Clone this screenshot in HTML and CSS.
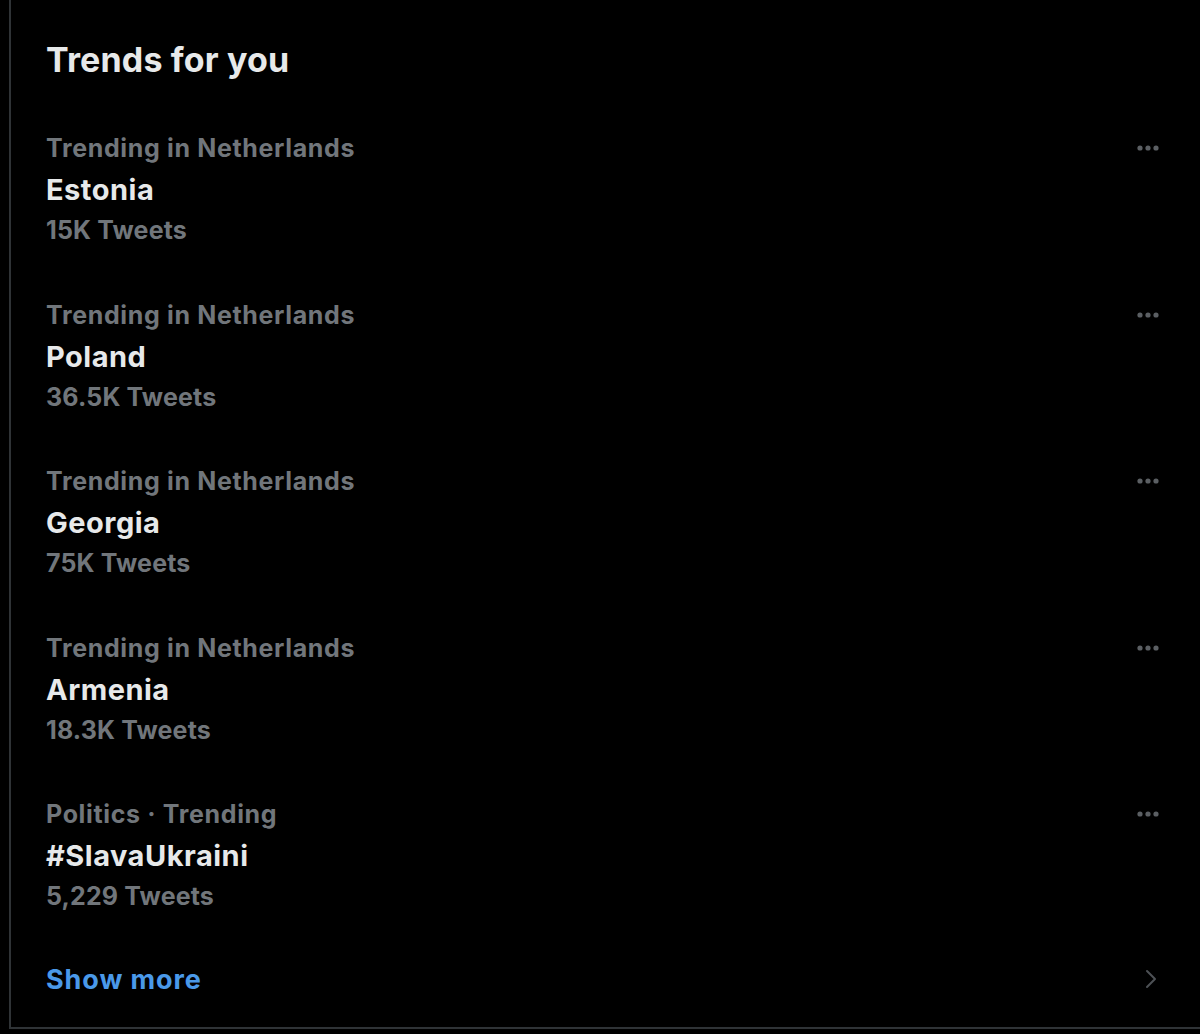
FILE: index.html
```html
<!DOCTYPE html>
<html lang="en">
<head>
  <meta charset="UTF-8"/>
  <title>Trends for you</title>
  <meta name="viewport" content="width=device-width,initial-scale=1"/>
  <link rel="stylesheet" href="styles.css">
</head>
<body>

  <section class="trends">
    <h2 class="trends-title">Trends for you</h2>

    <div class="trend">
      <div class="trend-text">
        <div class="trend-meta">Trending in Netherlands</div>
        <div class="trend-name">Estonia</div>
        <div class="trend-count">15K Tweets</div>
      </div>
      <svg class="more" width="24" height="8" viewBox="0 0 24 8"><circle cx="4" cy="4" r="2.6"/><circle cx="12" cy="4" r="2.6"/><circle cx="20" cy="4" r="2.6"/></svg>
    </div>

    <div class="trend">
      <div class="trend-text">
        <div class="trend-meta">Trending in Netherlands</div>
        <div class="trend-name">Poland</div>
        <div class="trend-count">36.5K Tweets</div>
      </div>
      <svg class="more" width="24" height="8" viewBox="0 0 24 8"><circle cx="4" cy="4" r="2.6"/><circle cx="12" cy="4" r="2.6"/><circle cx="20" cy="4" r="2.6"/></svg>
    </div>

    <div class="trend">
      <div class="trend-text">
        <div class="trend-meta">Trending in Netherlands</div>
        <div class="trend-name">Georgia</div>
        <div class="trend-count">75K Tweets</div>
      </div>
      <svg class="more" width="24" height="8" viewBox="0 0 24 8"><circle cx="4" cy="4" r="2.6"/><circle cx="12" cy="4" r="2.6"/><circle cx="20" cy="4" r="2.6"/></svg>
    </div>

    <div class="trend">
      <div class="trend-text">
        <div class="trend-meta">Trending in Netherlands</div>
        <div class="trend-name">Armenia</div>
        <div class="trend-count">18.3K Tweets</div>
      </div>
      <svg class="more" width="24" height="8" viewBox="0 0 24 8"><circle cx="4" cy="4" r="2.6"/><circle cx="12" cy="4" r="2.6"/><circle cx="20" cy="4" r="2.6"/></svg>
    </div>

    <div class="trend">
      <div class="trend-text">
        <div class="trend-meta">Politics · Trending</div>
        <div class="trend-name">#SlavaUkraini</div>
        <div class="trend-count">5,229 Tweets</div>
      </div>
      <svg class="more" width="24" height="8" viewBox="0 0 24 8"><circle cx="4" cy="4" r="2.6"/><circle cx="12" cy="4" r="2.6"/><circle cx="20" cy="4" r="2.6"/></svg>
    </div>

    <a class="show-more" href="#">
      <span>Show more</span>
      <svg class="chevron" width="12" height="20" viewBox="0 0 12 20"><path d="M2 2l8 8-8 8" fill="none" stroke-width="2" stroke-linecap="round" stroke-linejoin="round"/></svg>
    </a>
  </section>

</body>
</html>
```

FILE: styles.css
```css
body{margin:0;background:#000;color:#e7e9ea;font-family:'Inter','Noto Sans',sans-serif;}
.trends{margin-left:9px;border-left:2px solid #2f3336;border-bottom:2px solid #2f3336;height:1029px;box-sizing:border-box;padding:39px 40px 0 35px;}
.trends-title{font-size:34px;font-weight:700;line-height:41px;margin:0 0 26px;letter-spacing:.15px;}
.trend{display:flex;justify-content:space-between;align-items:flex-start;padding:22px 0;height:166.6px;box-sizing:border-box;}
.trend-text{line-height:41px;}
.trend-meta,.trend-count{font-size:25px;font-weight:700;color:#71767b;}
.trend-meta{letter-spacing:.65px;}
.trend-count{letter-spacing:.15px;}
.trend-name{font-size:29px;font-weight:700;letter-spacing:.5px;}
.more{fill:#5b5f63;margin-top:16px;}
.show-more{display:flex;justify-content:space-between;align-items:center;text-decoration:none;color:#4a99e9;font-size:27px;font-weight:700;line-height:41px;padding-top:20px;letter-spacing:.9px;}
.chevron{stroke:#4d5155;margin-right:3px;}
```
